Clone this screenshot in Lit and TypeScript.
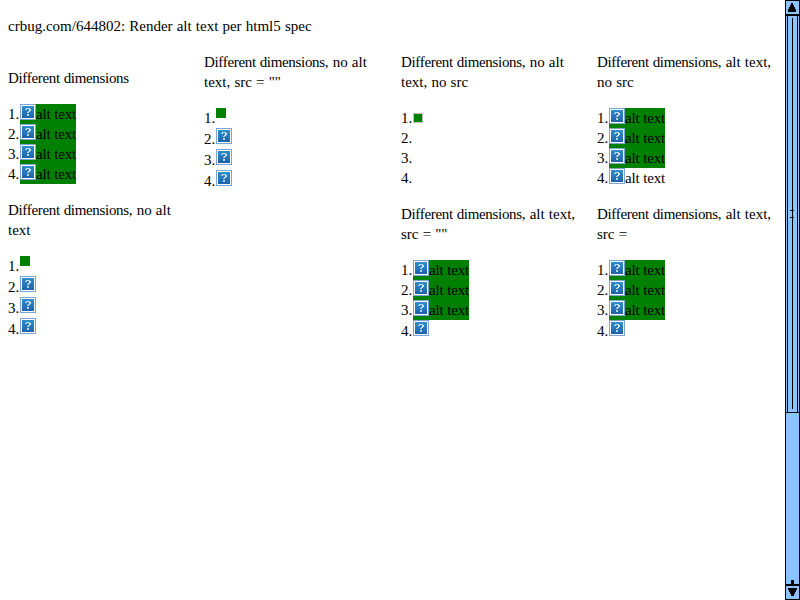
import { LitElement, html, svg, css, nothing } from "lit";
import { customElement, property } from "lit/decorators.js";

type Kind = "alt" | "plain" | "icon" | "square" | "bordered" | "empty";

// Set pixels of the question mark: x, y, width, opacity.
const MARK: [number, number, number, number][] = [
  [6, 4, 4, 0.7], [5, 5, 2, 0.65], [9, 5, 2, 0.8], [9, 6, 2, 0.8],
  [8, 7, 2, 0.75], [7, 8, 2, 0.7], [7, 10, 2, 0.75], [7, 11, 2, 0.65],
];

@customElement("missing-image")
class MissingImage extends LitElement {
  static styles = css`
    :host { display: block; width: 16px; height: 16px; flex: none; }
    .icon { display: block; }
  `;
  render() {
    return html`<svg class="icon" width="16" height="16" shape-rendering="crispEdges">
      <defs>
        <linearGradient id="g" x1="0" y1="0" x2="0" y2="1">
          <stop offset="0" stop-color="#2f8fcd" />
          <stop offset="1" stop-color="#1d62aa" />
        </linearGradient>
      </defs>
      <rect width="16" height="16" fill="#7fa3d3" />
      <rect x="1" y="1" width="14" height="14" fill="#fff" />
      <rect x="2" y="2" width="12" height="12" fill="url(#g)" />
      ${MARK.map(([x, y, w, o]) => svg`<rect x=${x} y=${y} width=${w} height="1" fill="#fff" opacity=${o} />`)}
    </svg>`;
  }
}

@customElement("image-list")
class ImageList extends LitElement {
  @property({ attribute: false }) items: Kind[] = [];
  static styles = css`
    :host { display: block; }
    .row { display: flex; height: 20px; line-height: 20px; }
    .row.tall { height: 21px; line-height: 22px; }
    .num { width: 12px; flex: none; white-space: nowrap; }
    .box { display: flex; width: 56px; height: 20px; white-space: nowrap; }
    .filled { background: #008000; }
    .alt { letter-spacing: -0.22px; }
    .square { width: 10px; height: 10px; background: #008000; }
    .bordered { box-sizing: border-box; width: 10px; height: 10px; margin-top: 5px; background: #008000; border: 1px solid #c0c0c0; }
  `;
  private content(k: Kind) {
    switch (k) {
      case "alt":
      case "plain":
        return html`<div class="box ${k === "alt" ? "filled" : ""}"><missing-image></missing-image><span class="alt">alt text</span></div>`;
      case "icon":
        return html`<missing-image></missing-image>`;
      case "square":
        return html`<div class="square"></div>`;
      case "bordered":
        return html`<div class="bordered"></div>`;
      default:
        return nothing;
    }
  }
  render() {
    return this.items.map((k, i) => html`<div class="row ${k === "icon" ? "tall" : ""}">
      <span class="num">${i + 1}.</span>${this.content(k)}
    </div>`);
  }
}

@customElement("scroll-bar")
class ScrollBar extends LitElement {
  static styles = css`
    :host { display: block; width: 15px; height: 600px; flex: none; }
    .bar { display: block; }
  `;
  render() {
    return html`<svg class="bar" width="15" height="600" shape-rendering="crispEdges">
      <rect width="15" height="600" fill="#000" />
      <rect x="1" y="1" width="13" height="13" fill="#8ac4ff" />
      <path d="M6 3h2v2h1v2h1v2h1v3H3V9h1V7h1V5h1z" fill="#000" />
      <rect x="1" y="16" width="13" height="568" fill="#8ac4ff" />
      <path d="M2 16h1v396H2zM12 16h1v396h-1zM7 18h1v391H7zM5 210h4v1H5zM5 217h4v1H5zM1 412h13v1H1zM6 580h3v4H6z" fill="#000" />
      <rect x="1" y="586" width="13" height="13" fill="#8ac4ff" />
      <path d="M3 588h9v2h-1v2h-1v2H9v2H6v-2H5v-2H4v-2H3z" fill="#000" />
    </svg>`;
  }
}

const GROUPS: { rest: string[]; items: Kind[]; pos: string }[] = [
  { rest: [""], items: ["alt", "alt", "alt", "alt"], pos: "middle" },
  { rest: [", no alt", 'text, src = ""'], items: ["square", "icon", "icon", "icon"], pos: "" },
  { rest: [", no alt", "text, no src"], items: ["bordered", "empty", "empty", "empty"], pos: "" },
  { rest: [", alt text,", "no src"], items: ["alt", "alt", "alt", "plain"], pos: "" },
  { rest: [", no alt", "text"], items: ["square", "icon", "icon", "icon"], pos: "" },
  { rest: [", alt text,", 'src = ""'], items: ["alt", "alt", "alt", "icon"], pos: "third" },
  { rest: [", alt text,", "src ="], items: ["alt", "alt", "alt", "icon"], pos: "fourth" },
];

@customElement("app-root")
class AppRoot extends LitElement {
  static styles = css`
    :host {
      display: flex; width: 800px; height: 600px; overflow: hidden;
      background: #fff; color: #000;
      font: 15px/20px "Liberation Serif", serif; word-spacing: 0.4px;
    }
    .page { flex: 1; padding: 16px 0 0 8px; }
    .intro { margin: 0 0 16px; white-space: nowrap; }
    .grid { display: grid; grid-template-columns: 196px 197px 196px 180px; grid-template-rows: 148px auto; }
    .middle { padding-top: 16px; }
    .third { grid-column: 3; padding-top: 4px; }
    .fourth { grid-column: 4; padding-top: 4px; }
    .title { margin: 0 0 16px; white-space: nowrap; }
    .line { display: block; }
    .tight { letter-spacing: -0.32px; }
  `;
  render() {
    return html`
      <div class="page">
        <p class="intro">crbug.com/644802: Render alt text per html5 spec</p>
        <div class="grid">
          ${GROUPS.map((g) => html`<section class=${g.pos || nothing}>
            <p class="title">
              <span class="line"><span class="tight">Different dimensions</span>${g.rest[0]}</span>
              ${g.rest[1] ? html`<span class="line">${g.rest[1]}</span>` : nothing}
            </p>
            <image-list .items=${g.items}></image-list>
          </section>`)}
        </div>
      </div>
      <scroll-bar></scroll-bar>
    `;
  }
}
